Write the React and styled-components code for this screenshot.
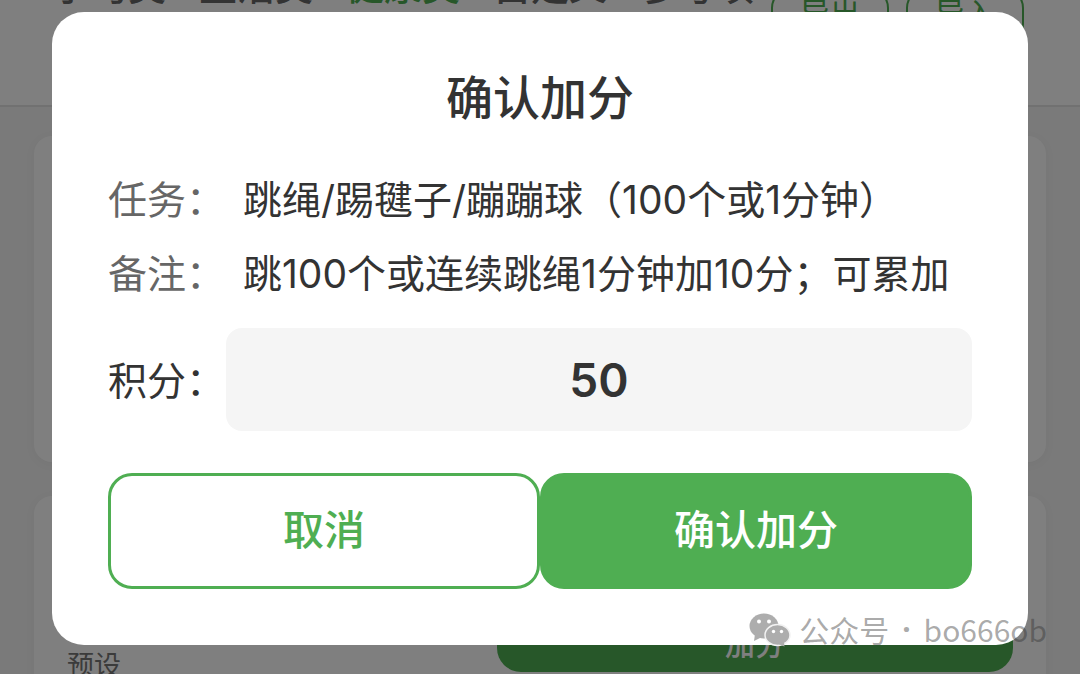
import React, { useState } from "react";
import styled, { createGlobalStyle } from "styled-components";

const GlobalStyle = createGlobalStyle`
  * { box-sizing: border-box; }
  html, body { margin: 0; background: #f4f4f4; }
  body, button, input {
    font-family: "Noto Sans CJK SC", "Noto Sans", sans-serif;
  }
`;

const green = "#4fae52";
const mixedFont = `Inter, "Noto Sans CJK SC", sans-serif`;

const Page = styled.div`
  position: relative;
  height: 100vh;
  overflow: hidden;
`;

const Header = styled.header`
  display: flex;
  align-items: flex-start;
  justify-content: space-between;
  height: 147px;
  margin-top: -40px;
  padding: 0 56px 0 52px;
  background: #fff;
  border-bottom: 2px solid #e2e2e2;
`;

const Tabs = styled.nav`
  display: flex;
  gap: 33px;
`;

const Tab = styled.a`
  color: ${(p) => (p.$active ? green : "#666")};
  font-size: 38px;
  font-weight: 500;
  line-height: 48px;
  white-space: nowrap;
  text-decoration: none;
`;

const HeaderActions = styled.div`
  display: flex;
  gap: 17px;
  padding-top: 28px;
`;

const SmallButton = styled.button`
  width: 118px;
  height: 56px;
  padding: 0 0 10px;
  color: ${green};
  font-size: 30px;
  line-height: 42px;
  white-space: nowrap;
  background: transparent;
  border: 2px solid ${green};
  border-radius: 20px;
`;

const Cards = styled.main`
  display: flex;
  flex-direction: column;
  gap: 34px;
  padding: 29px 34px;
`;

const Card = styled.section`
  display: flex;
  align-items: flex-end;
  justify-content: space-between;
  height: ${(p) => p.$height};
  padding: 32px 33px;
  background: #fff;
  border-radius: 18px;
  box-shadow: 0 2px 12px rgba(0, 0, 0, 0.04);
`;

const PresetCard = styled(Card)`
  padding-bottom: 20px;
`;

const Preset = styled.span`
  color: #777;
  font-size: 27px;
  line-height: 40px;
`;

const AddButton = styled.button`
  width: calc(50% + 43px);
  height: 60px;
  margin-bottom: 12px;
  padding: 0;
  color: #fff;
  font-size: 30px;
  font-weight: 500;
  line-height: 40px;
  background: ${green};
  border: 0;
  border-radius: 24px;
`;

const Overlay = styled.div`
  position: absolute;
  inset: 0;
  padding: 12px 52px;
  background: rgba(0, 0, 0, 0.5);
`;

const Dialog = styled.form`
  padding: 51px 56px 56px;
  color: #333;
  background: #fff;
  border-radius: 32px;
`;

const Title = styled.h2`
  margin: 0 0 36px;
  font-size: 47px;
  font-weight: 500;
  line-height: 64px;
  text-align: center;
`;

const Details = styled.dl`
  display: grid;
  grid-template-columns: 118px 1fr;
  column-gap: 17px;
  margin: 0 0 17px;
  font-family: ${mixedFont};
  font-size: 39px;
  line-height: 74px;
`;

const Term = styled.dt`
  color: #666;
  white-space: nowrap;
`;

const Description = styled.dd`
  margin: 0;
  white-space: nowrap;
`;

const Field = styled.div`
  display: flex;
  align-items: center;
  margin-bottom: 42px;
`;

const FieldLabel = styled.label`
  flex: 0 0 118px;
  padding-bottom: 4px;
  font-size: 39px;
  white-space: nowrap;
`;

const PointsInput = styled.input`
  flex: 1;
  min-width: 0;
  height: 103px;
  padding: 0;
  color: #333;
  font-family: ${mixedFont};
  font-size: 46px;
  font-weight: 600;
  text-align: center;
  background: #f5f5f5;
  border: 0;
  border-radius: 16px;
  outline: 0;
`;

const Actions = styled.div`
  display: flex;
`;

const ActionButton = styled.button`
  flex: 1;
  height: 116px;
  padding: 0 0 8px;
  color: ${(p) => (p.$primary ? "#fff" : green)};
  font-size: 41px;
  font-weight: 500;
  background: ${(p) => (p.$primary ? green : "#fff")};
  border: 3px solid ${green};
  border-radius: 24px;
`;

const Watermark = styled.div`
  position: absolute;
  right: 33px;
  bottom: 23px;
  display: flex;
  align-items: center;
  gap: 8px;
  color: rgba(50, 50, 50, 0.42);
  font-size: 30px;
  line-height: 44px;
  white-space: nowrap;
`;

const Account = styled.span`
  display: flex;
  gap: 13px;
`;

const Dot = styled.span`
  font-family: "Noto Sans", sans-serif;
  font-weight: 700;
`;

function WechatIcon() {
  return (
    <svg width="42" height="36" viewBox="0 0 42 36" aria-hidden="true">
      <g fill="#adadad">
        <ellipse cx="15" cy="15" rx="14.500" ry="12.500" />
        <path d="M6 23l-1 7 8-4z" />
      </g>
      <g fill="#adadad" stroke="#f2f2f2" strokeWidth="1.500">
        <ellipse cx="28.500" cy="24" rx="12.500" ry="10.500" />
      </g>
      <path fill="#adadad" d="M29 33l6.500 2.500-.5-4.500z" />
      <g fill="#fff">
        <circle cx="10" cy="10.500" r="2" />
        <circle cx="20" cy="10.500" r="2" />
        <circle cx="24.500" cy="20.500" r="1.700" />
        <circle cx="32.500" cy="20.500" r="1.700" />
      </g>
    </svg>
  );
}

const tabs = ["学习类", "生活类", "健康类", "自定义", "参考项"];

export default function App() {
  const [points, setPoints] = useState("50");

  return (
    <Page>
      <GlobalStyle />
      <Header>
        <Tabs>
          {tabs.map((name) => (
            <Tab key={name} href="#" $active={name === "健康类"}>
              {name}
            </Tab>
          ))}
        </Tabs>
        <HeaderActions>
          <SmallButton type="button">导出</SmallButton>
          <SmallButton type="button">导入</SmallButton>
        </HeaderActions>
      </Header>
      <Cards>
        <Card $height="326px" />
        <PresetCard $height="208px">
          <Preset>预设</Preset>
          <AddButton type="button">加分</AddButton>
        </PresetCard>
      </Cards>
      <Overlay>
        <Dialog
          role="dialog"
          aria-labelledby="dialog-title"
          onSubmit={(e) => e.preventDefault()}
        >
          <Title id="dialog-title">确认加分</Title>
          <Details>
            <Term>任务：</Term>
            <Description>跳绳/踢毽子/蹦蹦球（100个或1分钟）</Description>
            <Term>备注：</Term>
            <Description>跳100个或连续跳绳1分钟加10分；可累加</Description>
          </Details>
          <Field>
            <FieldLabel htmlFor="points">积分：</FieldLabel>
            <PointsInput
              id="points"
              inputMode="numeric"
              value={points}
              onChange={(e) => setPoints(e.target.value)}
            />
          </Field>
          <Actions>
            <ActionButton type="button">取消</ActionButton>
            <ActionButton type="submit" $primary>
              确认加分
            </ActionButton>
          </Actions>
        </Dialog>
      </Overlay>
      <Watermark>
        <WechatIcon />
        <Account>
          <span>公众号</span>
          <Dot>·</Dot>
          <span>bo666ob</span>
        </Account>
      </Watermark>
    </Page>
  );
}
